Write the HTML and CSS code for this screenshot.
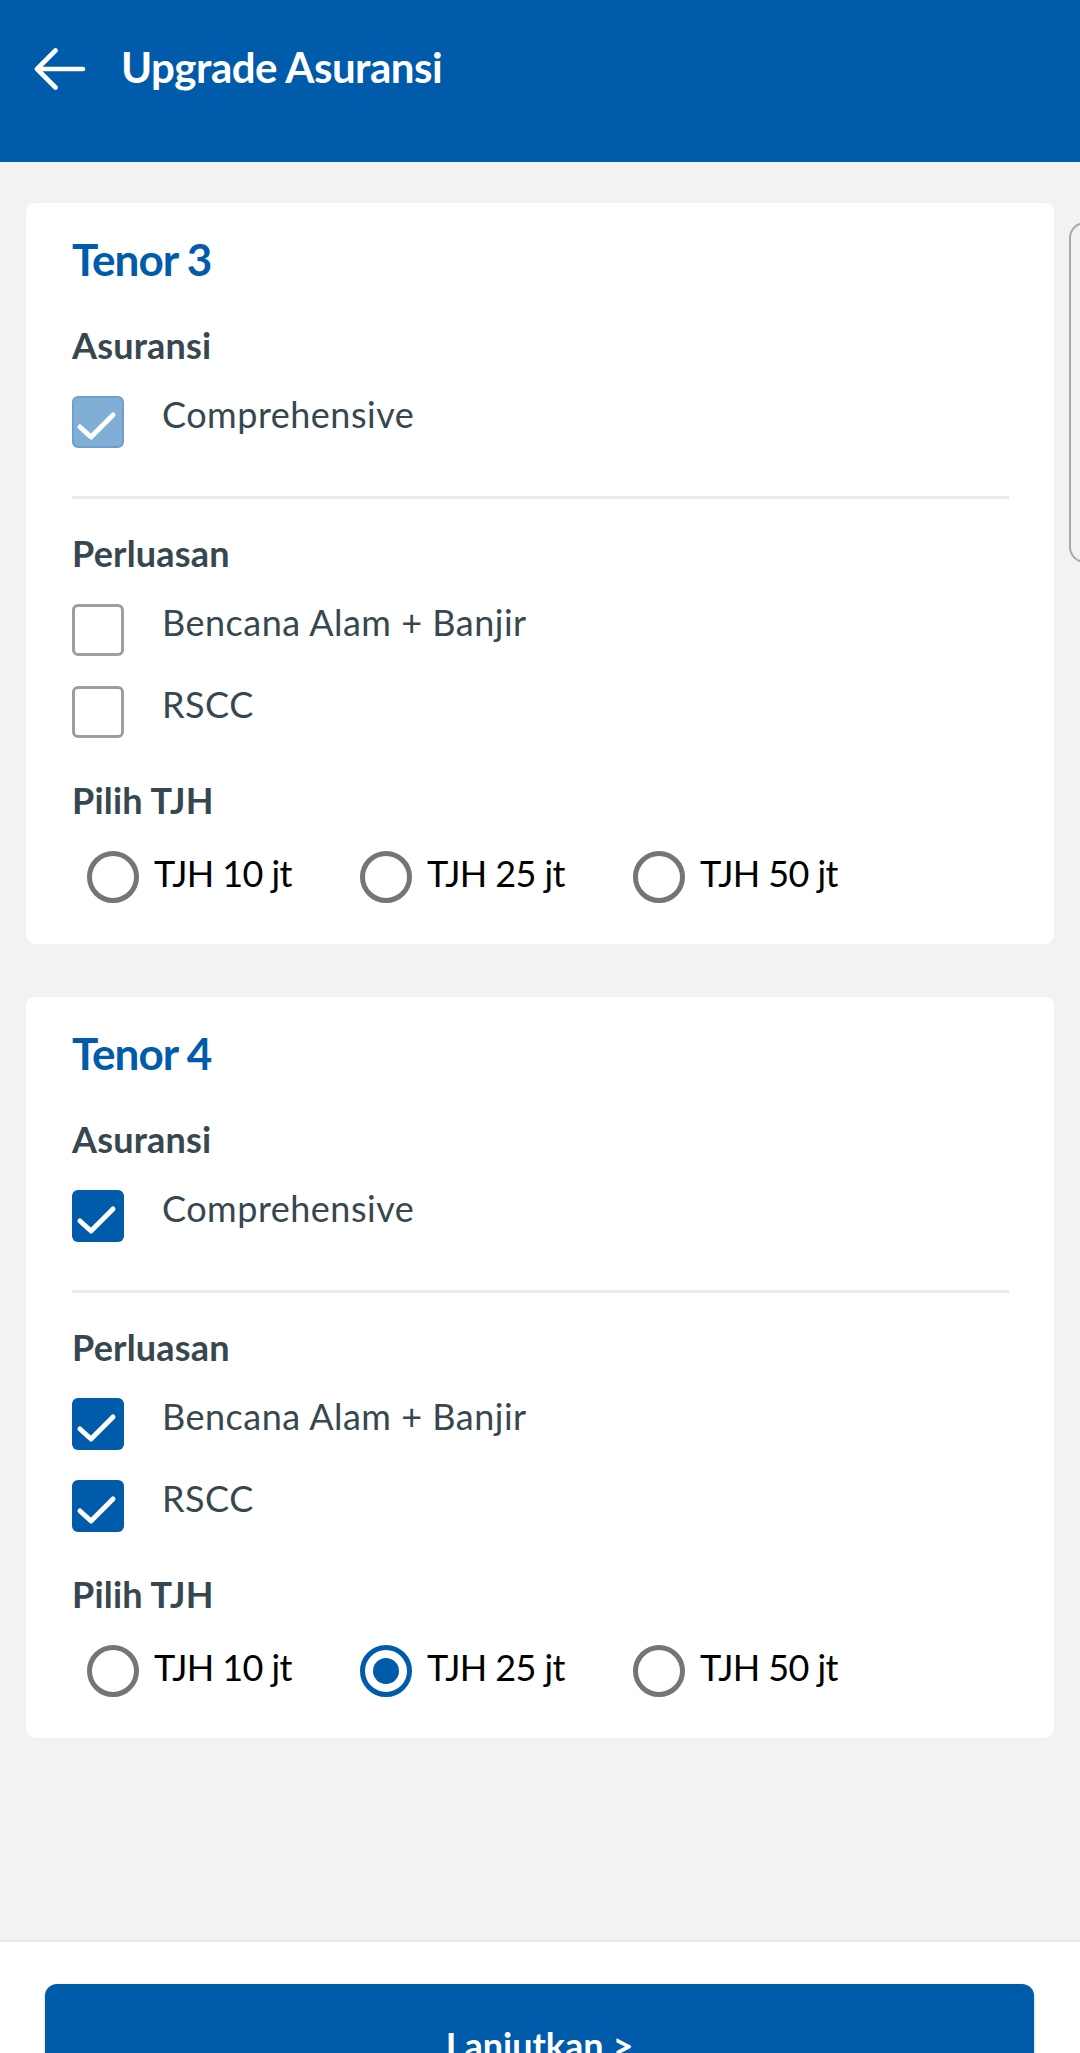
FILE: index.html
```html
<!DOCTYPE html>
<html lang="id">
<head>
<meta charset="utf-8">
<title>Upgrade Asuransi</title>
<link rel="stylesheet" href="styles.css">
</head>
<body>
<div class="screen">
  <header class="appbar">
    <svg class="back" width="52" height="42" viewBox="0 0 52 42" aria-hidden="true">
      <path d="M3 21 H49 M3 21 L21.5 2.5 M3 21 L21.5 39.5" fill="none" stroke="#fff" stroke-width="4.6" stroke-linecap="round" stroke-linejoin="round"/>
    </svg>
    <h1 class="appbar-title">Upgrade Asuransi</h1>
  </header>

  <main class="content">
    <div class="card-row">
      <section class="card">
        <h2 class="card-title">Tenor 3</h2>
        <h3 class="label">Asuransi</h3>
        <div class="check-row">
          <span class="cb cb-disabled">
            <svg viewBox="0 0 52 52" aria-hidden="true"><polyline points="8,31 19,41 41,19" fill="none" stroke="#fff" stroke-width="5" stroke-linecap="round" stroke-linejoin="round"/></svg>
          </span>
          <span class="check-text">Comprehensive</span>
        </div>
        <div class="divider"></div>
        <h3 class="label">Perluasan</h3>
        <div class="check-list">
          <div class="check-row">
            <span class="cb cb-empty"></span>
            <span class="check-text">Bencana Alam + Banjir</span>
          </div>
          <div class="check-row">
            <span class="cb cb-empty"></span>
            <span class="check-text">RSCC</span>
          </div>
        </div>
        <h3 class="label label-tjh">Pilih TJH</h3>
        <div class="radio-group">
          <div class="radio-item"><span class="radio"></span><span class="radio-text">TJH 10 jt</span></div>
          <div class="radio-item"><span class="radio"></span><span class="radio-text">TJH 25 jt</span></div>
          <div class="radio-item"><span class="radio"></span><span class="radio-text">TJH 50 jt</span></div>
        </div>
      </section>
      <div class="peek"></div>
    </div>

    <div class="card-row">
      <section class="card">
        <h2 class="card-title">Tenor 4</h2>
        <h3 class="label">Asuransi</h3>
        <div class="check-row">
          <span class="cb cb-checked">
            <svg viewBox="0 0 52 52" aria-hidden="true"><polyline points="8,31 19,41 41,19" fill="none" stroke="#fff" stroke-width="5" stroke-linecap="round" stroke-linejoin="round"/></svg>
          </span>
          <span class="check-text">Comprehensive</span>
        </div>
        <div class="divider"></div>
        <h3 class="label">Perluasan</h3>
        <div class="check-list">
          <div class="check-row">
            <span class="cb cb-checked">
              <svg viewBox="0 0 52 52" aria-hidden="true"><polyline points="8,31 19,41 41,19" fill="none" stroke="#fff" stroke-width="5" stroke-linecap="round" stroke-linejoin="round"/></svg>
            </span>
            <span class="check-text">Bencana Alam + Banjir</span>
          </div>
          <div class="check-row">
            <span class="cb cb-checked">
              <svg viewBox="0 0 52 52" aria-hidden="true"><polyline points="8,31 19,41 41,19" fill="none" stroke="#fff" stroke-width="5" stroke-linecap="round" stroke-linejoin="round"/></svg>
            </span>
            <span class="check-text">RSCC</span>
          </div>
        </div>
        <h3 class="label label-tjh">Pilih TJH</h3>
        <div class="radio-group">
          <div class="radio-item"><span class="radio"></span><span class="radio-text">TJH 10 jt</span></div>
          <div class="radio-item"><span class="radio radio-on"></span><span class="radio-text">TJH 25 jt</span></div>
          <div class="radio-item"><span class="radio"></span><span class="radio-text">TJH 50 jt</span></div>
        </div>
      </section>
    </div>
  </main>

  <footer class="bottom-bar">
    <button class="primary-btn" type="button">Lanjutkan &gt;</button>
  </footer>
</div>
</body>
</html>
```

FILE: styles.css
```css
* { box-sizing: border-box; }

html, body {
  margin: 0;
  padding: 0;
}

body {
  background: #f2f2f2;
  font-family: Lato, "Noto Sans", "Liberation Sans", sans-serif;
}

.screen {
  width: 1080px;
  height: 2053px;
  display: flex;
  flex-direction: column;
  overflow: hidden;
  background: #f2f2f2;
}

/* App bar */
.appbar {
  flex: 0 0 162px;
  height: 162px;
  background: #005baa;
  display: flex;
  align-items: flex-start;
  padding: 42px 0 0 34px;
}

.back {
  display: block;
  width: 52px;
  height: 42px;
  margin-top: 6px;
  flex-shrink: 0;
}

.appbar-title {
  margin: 0 0 0 35px;
  color: #ffffff;
  font-size: 42px;
  font-weight: 700;
  line-height: 50px;
  letter-spacing: -0.5px;
}

/* Content */
.content {
  flex: 1 1 auto;
  padding: 41px 0 0 26px;
  display: flex;
  flex-direction: column;
  gap: 53px;
}

.card-row {
  display: flex;
  align-items: flex-start;
}

.card {
  flex: 0 0 1028px;
  width: 1028px;
  background: #ffffff;
  border-radius: 9px;
  padding: 30px 45px 41px 46px;
}

.peek {
  flex: 0 0 120px;
  height: 341px;
  margin: 19px 0 0 15px;
  border: 2px solid #a8a8a8;
  border-right: none;
  border-radius: 16px 0 0 16px;
}

.card-title {
  margin: 0;
  color: #005baa;
  font-size: 44px;
  font-weight: 700;
  line-height: 52px;
  letter-spacing: -1px;
}

.label {
  margin: 38px 0 0;
  color: #37474f;
  font-size: 36px;
  font-weight: 700;
  line-height: 44px;
  letter-spacing: 0.2px;
}

.divider {
  height: 3px;
  background: #ebebeb;
  margin-top: 48px;
}

.divider + .label {
  margin-top: 32px;
}

.check-list {
  display: flex;
  flex-direction: column;
  gap: 30px;
  margin-top: 29px;
}

.check-row {
  display: flex;
  align-items: flex-start;
  margin-top: 29px;
}

.check-list .check-row {
  margin-top: 0;
}

.cb {
  flex: 0 0 52px;
  width: 52px;
  height: 52px;
  border-radius: 6px;
  display: block;
}

.cb svg {
  display: block;
  width: 52px;
  height: 52px;
}

.cb-disabled {
  background: #80aed6;
  border: 2px solid #6a9fd0;
}

.cb-disabled svg {
  margin: -2px;
}

.cb-checked {
  background: #005baa;
}

.cb-empty {
  background: #ffffff;
  border: 3px solid #9e9e9e;
}

.check-text {
  margin-left: 38px;
  margin-top: -4px;
  color: #37474f;
  font-size: 36px;
  font-weight: 400;
  line-height: 44px;
  letter-spacing: 0.5px;
}

.label-tjh {
  margin-top: 40px;
}

/* Radio */
.radio-group {
  display: flex;
  margin-top: 29px;
  padding-left: 15px;
}

.radio-item {
  flex: 0 0 273px;
  display: flex;
  align-items: flex-start;
}

.radio {
  flex: 0 0 52px;
  width: 52px;
  height: 52px;
  border: 5px solid #757575;
  border-radius: 50%;
  display: flex;
  align-items: center;
  justify-content: center;
}

.radio-on {
  border-color: #005baa;
}

.radio-on::after {
  content: "";
  width: 26px;
  height: 26px;
  border-radius: 50%;
  background: #005baa;
}

.radio-text {
  margin-left: 15px;
  margin-top: 0;
  color: #000000;
  font-size: 36px;
  line-height: 44px;
  font-weight: 400;
  letter-spacing: -0.6px;
}

/* Bottom bar */
.bottom-bar {
  flex: 0 0 112px;
  height: 112px;
  background: #ffffff;
  border-top: 1px solid #e4e4e4;
  box-shadow: 0 -1px 2px rgba(0, 0, 0, 0.05);
  padding: 42px 46px 0 45px;
  overflow: hidden;
}

.primary-btn {
  display: block;
  width: 100%;
  border: none;
  border-radius: 12px;
  background: #005baa;
  color: #ffffff;
  font-family: Lato, "Noto Sans", "Liberation Sans", sans-serif;
  font-size: 36px;
  font-weight: 700;
  line-height: 44px;
  padding: 39px 0 47px;
  text-align: center;
  box-shadow: 0 1px 3px rgba(0, 0, 0, 0.25);
}
```
